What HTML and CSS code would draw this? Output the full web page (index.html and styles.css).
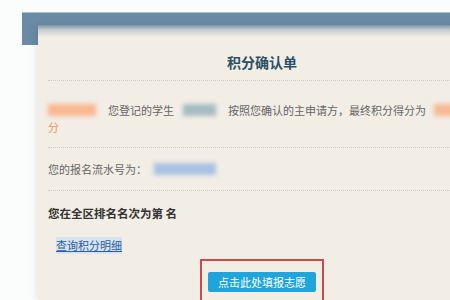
FILE: index.html
```html
<!DOCTYPE html>
<html lang="zh-CN">
<head>
    <meta charset="UTF-8">
    <title>积分确认单</title>
    <link rel="stylesheet" href="styles.css">
</head>
<body>
    <div class="page">
        <div class="top-bar"></div>

        <div class="card">
            <h1 class="card-title">积分确认单</h1>

            <div class="section section-score">
                <span class="blur blur-orange blur-name"></span>您登记的学生<span class="blur blur-grey"></span>按照您确认的主申请方，最终积分得分为<span class="blur blur-orange blur-score"></span><span class="orange">分</span>
            </div>

            <div class="section section-serial">
                您的报名流水号为：<span class="blur blur-blue"></span>
            </div>

            <div class="section section-rank">
                <p class="rank">您在全区排名名次为第&nbsp;名</p>
                <a href="#" class="detail-link">查询积分明细</a>
                <div class="action-box">
                    <button class="apply-button">点击此处填报志愿</button>
                </div>
            </div>
        </div>
    </div>
</body>
</html>
```

FILE: styles.css
```css
body {
    margin: 0;
    padding: 0;
    background-color: #fbfcfc;
    font-family: "Noto Sans CJK SC", "Microsoft YaHei", sans-serif;
}

.page {
    height: 300px;
    padding: 12px 0 0 22px;
    box-sizing: border-box;
    overflow: hidden;
}

.top-bar {
    height: 33px;
    background-color: #6a8aa5;
    border-top: 1px solid #a9c0d0;
    box-sizing: border-box;
}

.card {
    width: 448px;
    height: 275px;
    margin: -20px 0 0 16px;
    padding: 0 10px;
    box-sizing: border-box;
    background: linear-gradient(#7a95a9, #c9ccce 5px, #f2ede5 12px);
    box-shadow: -3px 0 6px rgba(0, 0, 0, 0.07);
    color: #666;
    font-size: 11px;
}

.card-title {
    margin: 0;
    padding: 27px 0 8px;
    line-height: 20px;
    font-size: 14px;
    font-weight: bold;
    text-align: center;
    color: #2b5065;
    border-bottom: 1px dotted #cfcac1;
}

.section {
    line-height: 17px;
    border-bottom: 1px dotted #cfcac1;
}

.section-score {
    padding: 21px 0 11px;
}

.section-serial {
    padding: 13px 0 12px;
}

.section-rank {
    border-bottom: none;
    padding-top: 14px;
}

.blur {
    display: inline-block;
    height: 12px;
    vertical-align: -1px;
    filter: blur(2px);
}

.blur-orange {
    background-color: #f8b993;
}

.blur-name {
    width: 48px;
    margin-right: 12px;
}

.blur-score {
    width: 40px;
    margin-left: 8px;
}

.blur-grey {
    width: 33px;
    margin: 0 12px 0 9px;
    background-color: #a7bcc2;
}

.blur-blue {
    width: 62px;
    margin-left: 7px;
    background-color: #a9c2e2;
}

.orange {
    color: #e8995f;
}

.rank {
    margin: 0;
    font-size: 11.5px;
    font-weight: bold;
    color: #333;
}

.detail-link {
    display: inline-block;
    margin: 15px 0 0 8px;
    color: #2a5ea8;
    background-color: #d7e3ee;
    text-decoration: underline;
}

.action-box {
    width: 124px;
    margin: 5px auto 0;
    padding: 11px 6px;
    box-sizing: border-box;
    border: 2px solid #cf4a4a;
    border-bottom: none;
}

.apply-button {
    display: block;
    width: 100%;
    height: 20px;
    padding: 0;
    border: none;
    border-radius: 2px;
    background-color: #1ea6dc;
    color: #fff;
    font-family: inherit;
    font-size: 11px;
}
```
